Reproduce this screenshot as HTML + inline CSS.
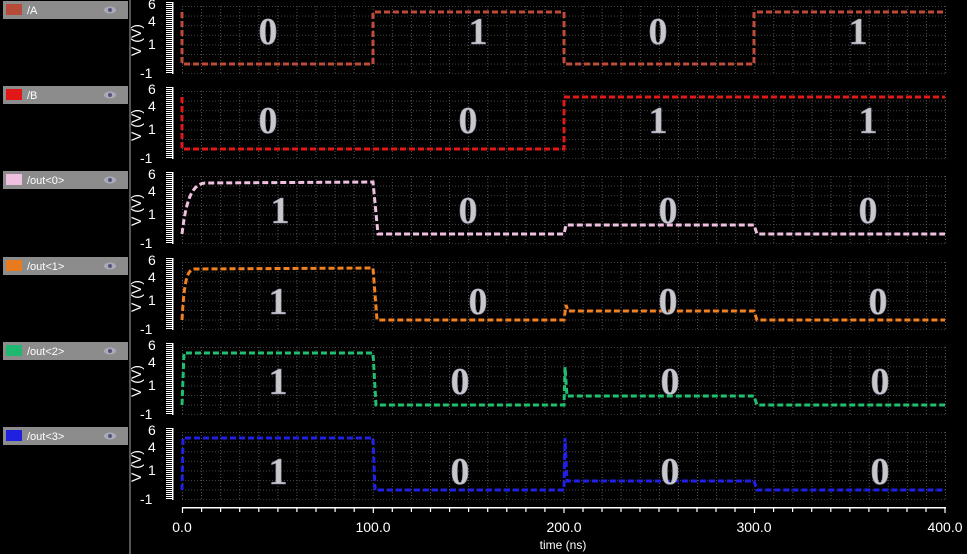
<!DOCTYPE html>
<html><head><meta charset="utf-8"><style>
html,body{margin:0;padding:0;background:#000;width:967px;height:554px;overflow:hidden}
svg{display:block}
.lt{font-family:"Liberation Sans",sans-serif;font-size:11px;fill:#fff}
.ax{font-family:"Liberation Sans",sans-serif;font-size:14px;fill:#fff}
.dg{font-family:"Liberation Serif",serif;font-weight:bold;font-size:38px;fill:#c8c8c8;stroke:#88a;stroke-width:0.6;text-anchor:middle}
</style></head><body>
<svg width="967" height="554" viewBox="0 0 967 554" xmlns="http://www.w3.org/2000/svg">
<defs>
<pattern id="gv" x="182" y="0" width="19.075" height="3" patternUnits="userSpaceOnUse"><rect x="0" y="0" width="1" height="1" fill="#555"/></pattern>
<pattern id="gh" x="182" y="6" width="3" height="9.6" patternUnits="userSpaceOnUse"><rect x="0" y="0" width="1" height="1" fill="#444"/></pattern>
<pattern id="rt" x="0" y="0" width="6" height="2" patternUnits="userSpaceOnUse"><rect x="0" y="0" width="6" height="1" fill="#fff"/></pattern>
<g id="grid">
<rect x="182" y="6" width="764" height="68" fill="url(#gh)"/>
<rect x="182" y="6" width="764" height="68" fill="url(#gv)"/>
<rect x="166" y="2" width="6" height="72" fill="url(#rt)"/>
<rect x="172" y="2" width="1.5" height="72" fill="#fff"/>
<text class="ax" x="148" y="9">6</text>
<text class="ax" x="148" y="26">4</text>
<text class="ax" x="148" y="49">1</text>
<text class="ax" x="140" y="78">-1</text>
<text class="ax" transform="translate(141,40) rotate(-90)" text-anchor="middle">V (V)</text>
</g>
<g id="eye"><ellipse cx="0" cy="0" rx="6" ry="3.5" fill="#aab"/><circle cx="0" cy="0" r="2" fill="#557"/></g>
</defs>
<rect x="129" y="0" width="2" height="554" fill="#555"/>
<g class="lt">
<rect x="3" y="1" width="125" height="18" fill="#8c8c8c"/><rect x="6" y="4" width="16" height="11" fill="#b84a3a"/><text x="27" y="14">/A</text><use href="#eye" x="110" y="10"/>
<rect x="3" y="86" width="125" height="18" fill="#8c8c8c"/><rect x="6" y="89" width="16" height="11" fill="#e01818"/><text x="27" y="99">/B</text><use href="#eye" x="110" y="95"/>
<rect x="3" y="171" width="125" height="18" fill="#8c8c8c"/><rect x="6" y="174" width="16" height="11" fill="#f0c0e0"/><text x="27" y="184">/out&lt;0&gt;</text><use href="#eye" x="110" y="180"/>
<rect x="3" y="257" width="125" height="18" fill="#8c8c8c"/><rect x="6" y="260" width="16" height="11" fill="#e87a20"/><text x="27" y="270">/out&lt;1&gt;</text><use href="#eye" x="110" y="266"/>
<rect x="3" y="342" width="125" height="18" fill="#8c8c8c"/><rect x="6" y="345" width="16" height="11" fill="#20b870"/><text x="27" y="355">/out&lt;2&gt;</text><use href="#eye" x="110" y="351"/>
<rect x="3" y="427" width="125" height="18" fill="#8c8c8c"/><rect x="6" y="430" width="16" height="11" fill="#2020e0"/><text x="27" y="440">/out&lt;3&gt;</text><use href="#eye" x="110" y="436"/>
</g>
<use href="#grid" y="0"/><use href="#grid" y="85"/><use href="#grid" y="170"/><use href="#grid" y="256"/><use href="#grid" y="341"/><use href="#grid" y="426"/>
<g fill="none" stroke-width="3" stroke-dasharray="6,3">
<path stroke="#c04a3a" d="M182,12 L182,64 L373,64 L373,12 L564,12 L564,64 L754,64 L754,12 L945,12"/>
<path stroke="#e01818" transform="translate(0,85)" d="M182,12 L182,64 L564,64 L564,12 L945,12"/>
<path stroke="#f0c0e0" transform="translate(0,170)" d="M182,64 C186,30 192,14 205,13 L373,12 L378,64 L564,64 L566,55 L754,55 L757,64 L945,64"/>
<path stroke="#f08020" transform="translate(0,256)" d="M182,64 C184,30 186,14 194,13 L373,12 L377,64 L564,64 L566,49 L568,55 L754,55 L757,64 L945,64"/>
<path stroke="#20c070" transform="translate(0,341)" d="M182,64 L184,12 L373,12 L376,64 L564,64 L565,26 L567,55 L754,55 L757,64 L945,64"/>
<path stroke="#2020e8" transform="translate(0,426)" d="M182,64 L183,12 L373,12 L375,64 L564,64 L565,12 L567,55 L754,55 L757,64 L945,64"/>
</g>
<g class="dg">
<text x="268" y="44">0</text><text x="478" y="44">1</text><text x="658" y="44">0</text><text x="858" y="44">1</text>
<text x="268" y="133">0</text><text x="468" y="133">0</text><text x="658" y="133">1</text><text x="868" y="133">1</text>
<text x="280" y="223">1</text><text x="468" y="223">0</text><text x="668" y="223">0</text><text x="868" y="223">0</text>
<text x="278" y="314">1</text><text x="478" y="314">0</text><text x="668" y="314">0</text><text x="878" y="314">0</text>
<text x="278" y="394">1</text><text x="460" y="394">0</text><text x="670" y="394">0</text><text x="880" y="394">0</text>
<text x="278" y="484">1</text><text x="460" y="484">0</text><text x="670" y="484">0</text><text x="880" y="484">0</text>
</g>
<rect x="182" y="507" width="764" height="1.5" fill="#fff"/>
<g stroke="#fff" stroke-width="1.2">
<path d="M182.5,507v6M201.6,507v5M220.6,507v5M239.7,507v5M258.8,507v5M277.9,507v5M296.9,507v5M316,507v5M335.1,507v5M354.2,507v5M373.3,507v6M392.3,507v5M411.4,507v5M430.5,507v5M449.6,507v5M468.6,507v5M487.7,507v5M506.8,507v5M525.9,507v5M544.9,507v5M564,507v6M583,507v5M602,507v5M621,507v5M640,507v5M659,507v5M678,507v5M697,507v5M716,507v5M735,507v5M754.5,507v6M773.6,507v5M792.6,507v5M811.7,507v5M830.8,507v5M849.9,507v5M868.9,507v5M888,507v5M907,507v5M926,507v5M945,507v6"/>
</g>
<g class="ax" text-anchor="middle">
<text x="182" y="532">0.0</text><text x="373" y="532">100.0</text><text x="564" y="532">200.0</text><text x="754" y="532">300.0</text><text x="945" y="532">400.0</text>
<text x="563" y="549" style="font-size:12px">time (ns)</text>
</g>
</svg>
</body></html>
